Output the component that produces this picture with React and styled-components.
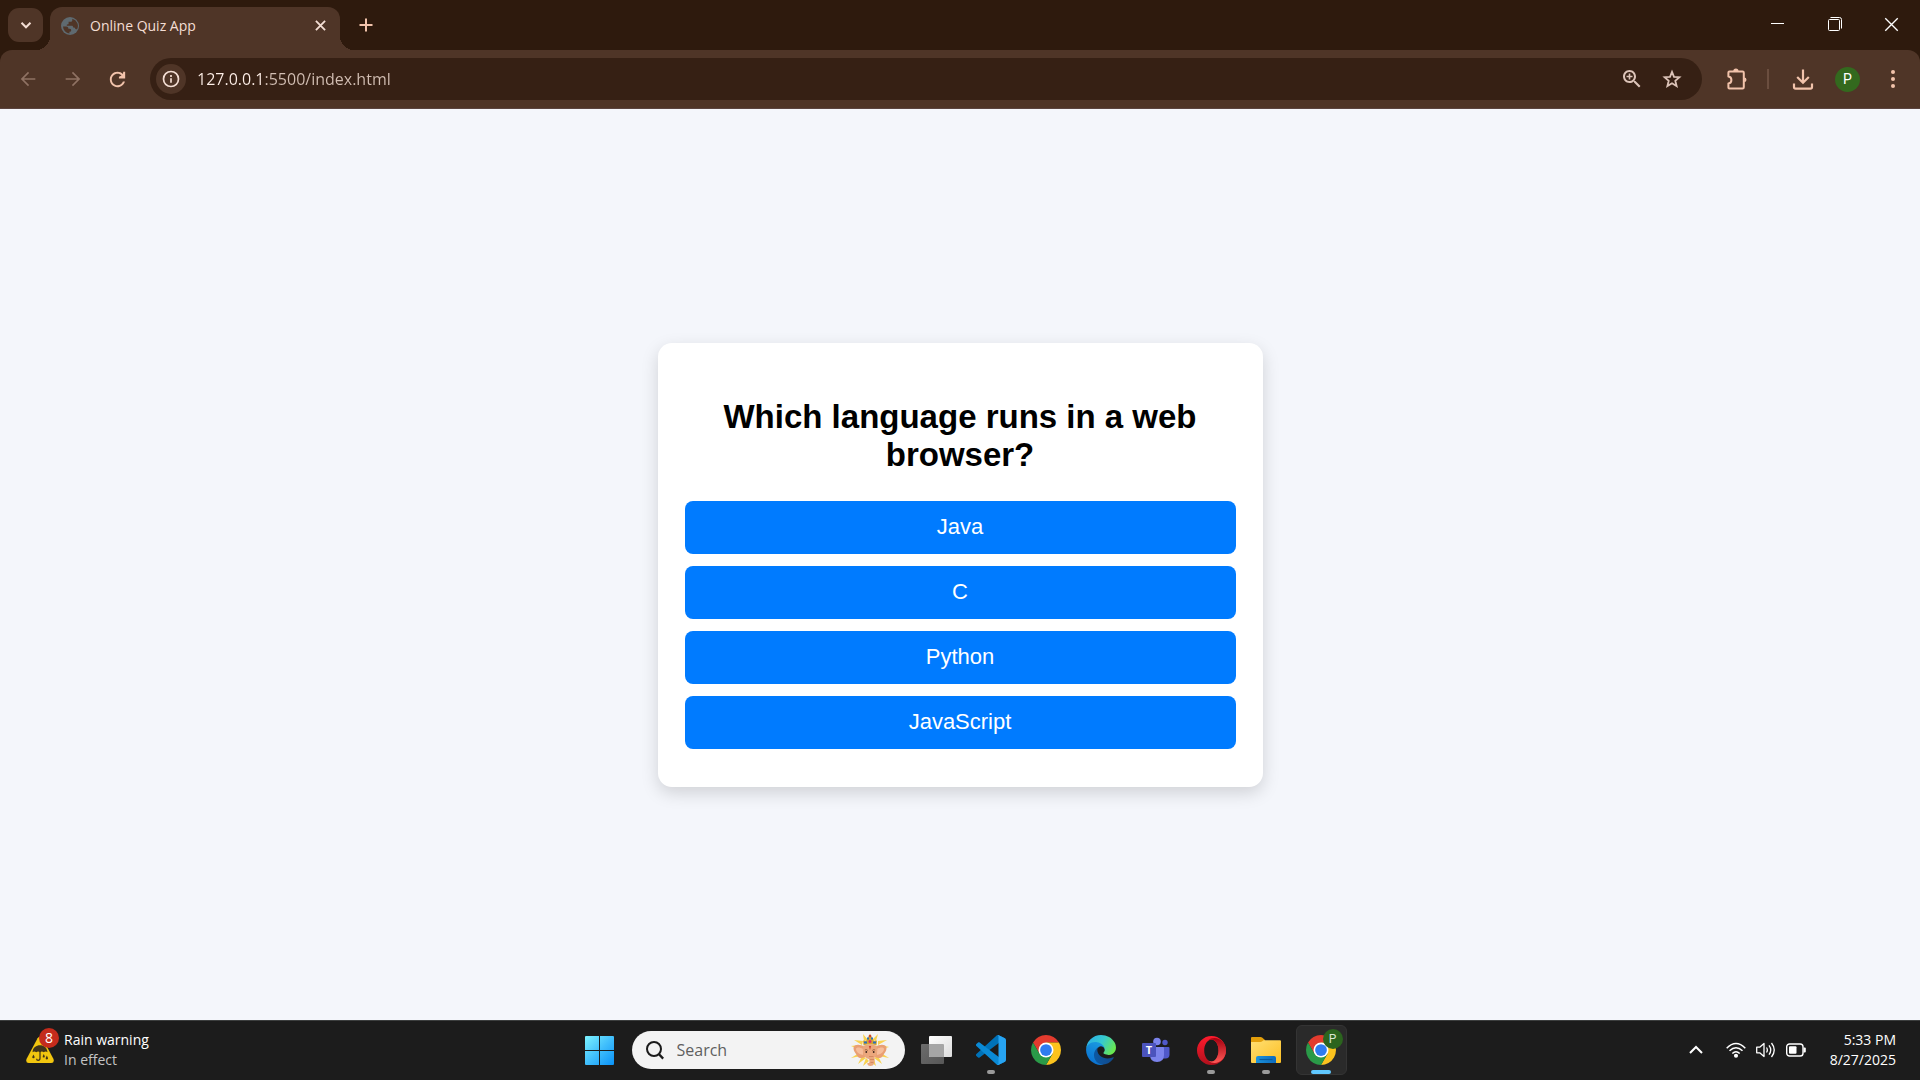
import React from "react";
import styled, { createGlobalStyle } from "styled-components";

const uiFont = `"Open Sans", "Noto Sans", sans-serif`;

const GlobalStyle = createGlobalStyle`
  *, *::before, *::after { box-sizing: border-box; }
  body { margin: 0; }
  button, input { font: inherit; color: inherit; margin: 0; padding: 0; border: 0; background: none; outline: none; }
  svg { display: block; flex: none; }
`;

const Desktop = styled.div`
  display: flex;
  flex-direction: column;
  min-height: 100vh;
  font-family: ${uiFont};
`;

/* ---------- browser window ---------- */

const TabStrip = styled.header`
  display: flex;
  align-items: flex-end;
  height: 50px;
  padding-left: 8px;
  background: #2e1a0d;
`;

const TabSearch = styled.button`
  display: grid;
  place-items: center;
  width: 35px;
  height: 34px;
  margin-right: 7px;
  margin-bottom: 8px;
  border-radius: 11px;
  background: #4f3527;
  color: #f4ded4;
`;

const Tab = styled.div`
  position: relative;
  display: flex;
  align-items: center;
  width: 290px;
  height: 43px;
  padding: 0 10px 6px 11px;
  border-radius: 12px 12px 0 0;
  background: #4f3527;
  color: #f4ded4;

  &::before,
  &::after {
    content: "";
    position: absolute;
    bottom: 0;
    width: 14px;
    height: 14px;
  }
  &::before {
    right: 100%;
    background: radial-gradient(circle at 0 0, transparent 14px, #4f3527 14px);
  }
  &::after {
    left: 100%;
    background: radial-gradient(circle at 100% 0, transparent 14px, #4f3527 14px);
  }
`;

const TabTitle = styled.span`
  flex: 1;
  margin-left: 11px;
  font-size: 14px;
  line-height: 20px;
`;

const IconButton = styled.button`
  display: grid;
  place-items: center;
  width: ${(p) => p.$size}px;
  height: ${(p) => p.$size}px;
  color: ${(p) => p.$color || "inherit"};
`;

const NewTab = styled(IconButton)`
  margin: 0 0 12px 13px;
`;

const WindowControls = styled.div`
  display: flex;
  align-self: flex-start;
  margin-left: auto;
`;

const WindowButton = styled.button`
  display: grid;
  place-items: center;
  width: 57px;
  height: 48px;
  color: #fff;
`;

const ToolbarBack = styled.div`
  background: #2e1a0d;
`;

const Toolbar = styled.nav`
  display: flex;
  align-items: center;
  height: 59px;
  padding: 0 5px;
  border-bottom: 1px solid #5b443f;
  border-radius: 12px 12px 0 0;
  background: #4f3527;
`;

const AddressBar = styled.div`
  display: flex;
  flex: 1;
  align-items: center;
  height: 42px;
  margin: 0 12px 0 10px;
  padding: 0 10px 0 6px;
  border-radius: 21px;
  background: #362014;
  color: #dcc3b8;
`;

const SiteInfo = styled.button`
  display: grid;
  place-items: center;
  width: 30px;
  height: 30px;
  border-radius: 50%;
  background: #4f3527;
  color: #f4ded4;
`;

const AddressInput = styled.input`
  flex: 1;
  height: 30px;
  margin-left: 11px;
  font-size: 16px;
  background: linear-gradient(90deg, #fff0e9 67px, #d3bfb4 67px);
  background-clip: text;
  -webkit-text-fill-color: transparent;
`;

const Divider = styled.span`
  width: 2px;
  height: 20px;
  margin: 0 11px 0 8px;
  background: #6b4e3f;
`;

const Avatar = styled.span`
  display: grid;
  place-items: center;
  width: 25px;
  height: 25px;
  border-radius: 50%;
  background: #33691e;
  color: #fff;
  font: 14px/25px Roboto, sans-serif;
`;

/* ---------- quiz page ---------- */

const Page = styled.main`
  display: flex;
  flex: 1;
  align-items: center;
  justify-content: center;
  background: #f4f6fb;
  font-family: "Liberation Sans", Arial, sans-serif;
`;

const QuizCard = styled.section`
  width: 605px;
  padding: 55px 27px 38px;
  border-radius: 14px;
  background: #fff;
  box-shadow: 0 6px 17px rgba(0, 0, 0, 0.15);
`;

const Question = styled.h2`
  margin: 0 0 27px;
  color: #000;
  font-size: 33px;
  font-weight: 700;
  line-height: 38px;
  text-align: center;
`;

const AnswerList = styled.div`
  display: grid;
  gap: 12px;
`;

const Answer = styled.button`
  height: 53px;
  border-radius: 8px;
  background: #007bff;
  color: #fff;
  font-size: 22px;
  cursor: pointer;
`;

/* ---------- taskbar ---------- */

const Taskbar = styled.footer`
  display: grid;
  grid-template-columns: 1fr auto 1fr;
  align-items: center;
  height: 60px;
  background: #1c1c1c;
  box-shadow: inset 0 1px #3c3e3e;
  color: #fff;
  font-size: 14px;
  line-height: 20px;
`;

const Weather = styled.button`
  display: flex;
  align-items: center;
  justify-self: start;
  padding-left: 25px;
  gap: 9px;
  text-align: left;
`;

const WeatherIcon = styled.span`
  position: relative;
`;

const WeatherBadge = styled.span`
  position: absolute;
  top: -8px;
  right: -4px;
  width: 20px;
  height: 20px;
  border-radius: 50%;
  background: #c42b1c;
  font-size: 14px;
  line-height: 20px;
  text-align: center;
`;

const Line = styled.span`
  display: block;
  color: ${(p) => (p.$dim ? "#c4c4c4" : "#fff")};
`;

const Apps = styled.div`
  display: flex;
  align-items: center;
`;

const AppButton = styled.button`
  position: relative;
  display: grid;
  place-items: center;
  width: 51px;
  height: 50px;
  margin: 0 2px;
  border: 1px solid ${(p) => (p.$active ? "#343434" : "transparent")};
  border-radius: 6px;
  background: ${(p) => (p.$active ? "#2a2a2a" : "none")};

  &::after {
    content: "";
    position: absolute;
    bottom: 0;
    width: ${(p) => (p.$active ? 20 : p.$running ? 8 : 0)}px;
    height: 4px;
    border-radius: 2px;
    background: ${(p) => (p.$active ? "#60c8ff" : "#9a9a9a")};
  }
`;

const ProfileBadge = styled.span`
  position: absolute;
  top: 3px;
  right: 3px;
  width: 20px;
  height: 20px;
  border-radius: 50%;
  background: #2b641e;
  color: #d7e6d2;
  font: 12px/20px Roboto, sans-serif;
`;

const SearchBox = styled.label`
  display: flex;
  align-items: center;
  width: 273px;
  height: 38px;
  margin: 0 4px 0 5px;
  padding: 0 15px 0 14px;
  border-radius: 19px;
  background: #f3f3f3;
  color: #1b1b1b;
`;

const SearchInput = styled.input`
  flex: 1;
  min-width: 0;
  margin-left: 13px;
  font-size: 16px;
  &::placeholder { color: #5f5f5f; opacity: 1; }
`;

const Tray = styled.div`
  display: flex;
  align-items: center;
  justify-self: end;
  padding-right: 24px;
`;

const TrayGroup = styled.button`
  display: flex;
  align-items: center;
  gap: 10px;
  margin: 0 20px 0 22px;
`;

const Clock = styled.button`
  min-width: 70px;
  text-align: right;
`;

/* ---------- icons ---------- */

const Glyph = ({ d, size }) => (
  <svg width={size} height={size} viewBox="0 0 24 24" fill="currentColor"><path d={d} /></svg>
);

const paths = {
  back: "M20 11.1H7.5l5.7-5.7L12 4.1 4.1 12l7.9 7.9 1.2-1.3-5.7-5.7H20z",
  forward: "M4 11.1h12.5l-5.7-5.7L12 4.1l7.9 7.9-7.9 7.9-1.2-1.3 5.7-5.7H4z",
  reload: "M17.65 6.35C16.2 4.9 14.21 4 12 4c-4.42 0-7.99 3.58-7.99 8s3.57 8 7.99 8c3.73 0 6.84-2.55 7.73-6h-2.08c-.82 2.33-3.04 4-5.65 4-3.31 0-6-2.69-6-6s2.69-6 6-6c1.66 0 3.14.69 4.22 1.78L13.5 9v2H20V4h-2z",
  zoom: "M15.5 14h-.79l-.28-.27C15.41 12.59 16 11.11 16 9.5 16 5.91 13.09 3 9.5 3S3 5.91 3 9.5 5.91 16 9.5 16c1.61 0 3.09-.59 4.23-1.57l.27.28v.79l5 4.99L20.49 19l-4.99-5zm-6 0C7.01 14 5 11.99 5 9.5S7.01 5 9.5 5 14 7.01 14 9.5 11.99 14 9.5 14zm3-3.7h-2.2v2.2H8.7v-2.2H6.5V8.7h2.2V6.5h1.6v2.2h2.2z",
};

const Star = () => (
  <svg width="20" height="20" viewBox="0 0 20 20" fill="none" stroke="currentColor" strokeWidth="1.8">
    <path d="M10 2.800l2 5 5.400.400-4.100 3.600 1.300 5.300-4.600-2.900-4.600 2.900 1.300-5.300-4.100-3.600 5.400-.400z" />
  </svg>
);

const Globe = () => (
  <svg width="18" height="18" viewBox="0 0 18 18">
    <circle cx="9" cy="9" r="9" fill="#5f6a70" />
    <path d="M2 9.5h3.2c1.7 0 2.2 1 2.2 2.2h1.4c1.2 0 1.4.9 1.4 1.8 0 1-.8 1.2-1.8 1.3v1.7A7.3 7.3 0 0 1 2 9.5zM11.3 1.8v1.4c0 1.2-.8 1.6-2 1.6H7.6v1.7c0 .9-.7 1.1-1.8 1.2v1h4.8c1.2 0 1.4.7 1.6 1.7.9 0 1.9-.1 1.9.9 0 1.4 1.6.9 1.9 1.2A7.4 7.4 0 0 0 11.3 1.8z" fill="#4f3527" />
  </svg>
);

const Info = () => (
  <svg width="18" height="18" viewBox="0 0 18 18" fill="none" stroke="currentColor" strokeWidth="1.7">
    <circle cx="9" cy="9" r="7.5" /><path d="M9 8.2v4.6M9 5.1v1.8" />
  </svg>
);

const Puzzle = () => (
  <svg width="24" height="24" viewBox="0 0 24 24" fill="none" stroke="currentColor" strokeWidth="2" strokeLinejoin="round">
    <path d="M3.4 5.6Q3.4 4.6 4.4 4.6h13.2q1.2 0 1.2 1.2v14.4q0 1.200-1.200 1.200H4.400q-1 0-1-1v-3.900c4-.4 4-6.600 0-7z" />
    <path d="M8.300 4.200a2.600 2.600 0 0 1 5.200 0zM19.200 10.400a2.300 2.300 0 0 1 0 4.600z" fill="currentColor" stroke="none" />
  </svg>
);

const Download = () => (
  <svg width="24" height="24" viewBox="0 0 24 24" fill="none" stroke="currentColor" strokeWidth="2.2">
    <path d="M12 2.5v13M6.2 10l5.8 5.8 5.8-5.8M3 16.5v3.6q0 1.6 1.6 1.6h14.8q1.6 0 1.6-1.6v-3.6" />
  </svg>
);

const Dots = () => (
  <svg width="6" height="20" viewBox="0 0 6 20" fill="currentColor">
    <circle cx="3" cy="3" r="2" /><circle cx="3" cy="10" r="2" /><circle cx="3" cy="17" r="2" />
  </svg>
);

const Cross = ({ size, width }) => (
  <svg width={size} height={size} viewBox="0 0 12 12" fill="none" stroke="currentColor" strokeWidth={width}>
    <path d="M1 1l10 10M11 1L1 11" />
  </svg>
);

const RainWarning = () => (
  <svg width="30" height="28" viewBox="0 0 32 28" preserveAspectRatio="none">
    <path d="M13.4 2.2Q16 -1 18.6 2.2L30.4 23Q31.6 27 28 27H4Q.4 27 1.6 23z" fill="#f2c60f" />
    <path d="M8 16.2c.5-5 4-7 8-7s7.500 2 8 7q-2-1.300-4 0-2-1.300-4 0-2-1.300-4 0-2-1.300-4 0z" fill="#40341a" />
    <path d="M16 15v7.300q0 2-2 2-1.600 0-1.600-1.600" fill="none" stroke="#40341a" strokeWidth="1.300" />
    <path d="M9 18.500l1.300 2.500a1.300 1.300 0 1 1-2.600 0zM20 18l1 2a1.100 1.100 0 1 1-2 0zM23.300 19.500l1.100 2.200a1.200 1.200 0 1 1-2.200 0z" fill="#40341a" />
  </svg>
);

const Windows = () => (
  <svg width="29" height="29" viewBox="0 0 29 29">
    <defs><linearGradient id="win" x1="0" y1="0" x2="1" y2="1"><stop stopColor="#7df3ff" /><stop offset=".5" stopColor="#41bffc" /><stop offset="1" stopColor="#0a92f8" /></linearGradient></defs>
    <path d="M1 0h13v14H0V1q0-1 1-1zM15 0h13q1 0 1 1v13H15zM0 15h14v14H1q-1 0-1-1zM15 15h14v13q0 1-1 1H15z" fill="url(#win)" />
  </svg>
);

const Magnifier = () => (
  <svg width="18" height="19" viewBox="0 0 18 19" fill="none" stroke="currentColor" strokeWidth="2">
    <circle cx="8" cy="8" r="7" /><path d="M12.800 13l4.400 4.600" strokeWidth="2.400" />
  </svg>
);

const Ganesha = () => (
  <svg width="40" height="34" viewBox="0 0 40 34">
    <path d="M14 8L13 1l5 6zM26 8l2-7-6 6zM12 12L4 7l9 1zM28 12l9-5-9 1zM8 16l-7-3 8-1zM32 16l7-2-8-2zM9 20l-8 5 10-2zM31 20l8 5-10-2zM12 23l-4 8 8-6zM28 23l4 8-8-6zM16 25l-3 8 6-5zM24 26l2 7-6-5z" fill="#f8d24f" />
    <path d="M15 14C10 11 4 11 3.500 15c0 3 1.500 4 2.500 6s3 6 9 3zM25 14c5-3 11-3 11.500 1 0 3-1.500 4-2.500 6s-3 6-9 3z" fill="#e99f74" />
    <path d="M13 16c-3-2-7-2-7 0s2 5 7 6zM27 16c3-2 7-2 7 0s-2 5-7 6z" fill="#f6bd9a" />
    <path d="M13.500 13q6.500-4 13 0c2 6 0 9-2 11.500.5 5-.5 8.500-4 8.500-2.500 0-3.700-1.700-3-3.500 1 1 2 .5 2-1l-.500-2.500c-5-1-7.500-7-5.500-13z" fill="#eba77c" />
    <path d="M13.500 12.500L13 7.500l3 .500 4-7 4 7 3-.5-.5 5q-6.500-3-13 0z" fill="#d9a52e" />
    <path d="M14 8.500h3v2h-3zM23 8.500h3v2h-3zM17 4.500h2v2h-2zM21 4.500h2v2h-2z" fill="#2a72bb" />
    <circle cx="20" cy="8.500" r="1.500" fill="#d82f73" /><circle cx="20" cy="3" r="1.300" fill="#cf432d" />
    <path d="M18.900 13h2.200L20 17z" fill="#c9412c" />
    <path d="M14.800 17q1.700-1 3 .500M22.200 17.500q1.300-1.500 3-.5" fill="none" stroke="#8d5034" strokeWidth=".8" />
    <circle cx="16.300" cy="19" r=".9" fill="#3c241a" /><circle cx="23.700" cy="19" r=".9" fill="#3c241a" />
    <path d="M19 23.500h4.500M20 26.500h4M20.500 29.500h3" stroke="#cf8359" strokeWidth=".8" />
  </svg>
);

const TaskView = () => (
  <svg width="31" height="29" viewBox="0 0 31 29">
    <defs>
      <linearGradient id="tvf" x1="0" y1="0" x2="1" y2="1"><stop stopColor="#fff" /><stop offset="1" stopColor="#dcdcdc" /></linearGradient>
      <linearGradient id="tvb" x1="0" y1="0" x2="1" y2="1"><stop stopColor="#6c6c6c" /><stop offset="1" stopColor="#575757" /></linearGradient>
    </defs>
    <rect x="0" y="8" width="23" height="20" rx="1" fill="url(#tvb)" />
    <rect x="8" y="0" width="23" height="21" rx="1" fill="url(#tvf)" />
    <path d="M8 8h14q1 0 1 1v12H9q-1 0-1-1z" fill="#a6a6a6" />
  </svg>
);

const VSCode = () => (
  <svg width="30" height="30" viewBox="0 0 100 100">
    <path fill="#0072b8" d="M96.460 10.800L75.860.88C73.470-.27 70.620.21 68.750 2.080L1.300 63.580c-1.810 1.660-1.810 4.510 0 6.170l5.510 5c1.490 1.350 3.720 1.450 5.320.24L93.360 13.370C96.090 11.300 100 13.250 100 16.670v-.24c0-2.400-1.380-4.590-3.540-5.630z" />
    <path fill="#0a8ad6" d="M96.460 89.200l-20.600 9.920c-2.390 1.150-5.240.67-7.110-1.200L1.300 36.420c-1.810-1.660-1.810-4.510 0-6.170l5.510-5c1.490-1.350 3.720-1.450 5.320-.24l81.230 61.620c2.730 2.070 6.640.12 6.640-3.300v.24c0 2.400-1.380 4.590-3.540 5.630z" />
    <path fill="#27a4f2" d="M75.860 99.130c-2.390 1.140-5.240.66-7.110-1.210 2.310 2.300 6.250.67 6.250-2.590V4.670c0-3.260-3.940-4.890-6.250-2.590C70.620.21 73.470-.27 75.860.87l20.600 9.910c2.160 1.040 3.540 3.230 3.540 5.630v67.180c0 2.400-1.380 4.590-3.540 5.630z" />
  </svg>
);

const Chrome = () => (
  <svg width="30" height="30" viewBox="0 0 48 48">
    <path d="M24 12h20.780A24 24 0 0 0 3.220 12L13.600 30z" fill="#e33b2e" />
    <path d="M34.400 30L24 48A24 24 0 0 0 44.780 12H24z" fill="#fcc31e" />
    <path d="M13.600 30L3.220 12A24 24 0 0 0 24 48l10.400-18z" fill="#2a9a48" />
    <circle cx="24" cy="24" r="12" fill="#fff" /><circle cx="24" cy="24" r="9.400" fill="#2f7cf0" />
  </svg>
);

const Edge = () => (
  <svg width="30" height="30" viewBox="4 5 257 257">
    <defs>
      <linearGradient id="ed1" x1="0" y1="0" x2="1" y2="0"><stop stopColor="#0c59a4" /><stop offset="1" stopColor="#114a8b" /></linearGradient>
      <linearGradient id="ed2" x1=".7" y1="0" x2=".3" y2="1"><stop stopColor="#1b9de2" /><stop offset=".5" stopColor="#1285d8" /><stop offset="1" stopColor="#0a6fd0" /></linearGradient>
      <linearGradient id="ed3" x1="0" y1=".2" x2="1" y2=".6"><stop stopColor="#2aaee8" /><stop offset=".5" stopColor="#36c9cf" /><stop offset="1" stopColor="#6ae84e" /></linearGradient>
    </defs>
    <path fill="url(#ed1)" d="M235.680 195.460a93.730 93.730 0 0 1-10.540 4.710 101.870 101.870 0 0 1-35.900 6.460c-47.320 0-88.540-32.550-88.540-74.320A31.480 31.480 0 0 1 117.130 105c-42.800 1.800-53.800 46.400-53.800 72.530 0 73.880 68.090 81.370 82.760 81.370 7.910 0 19.840-2.300 27-4.560l1.310-.44a128.340 128.340 0 0 0 66.600-52.800 4 4 0 0 0-5.320-5.640z" />
    <path fill="url(#ed2)" d="M110.340 246.340A79.200 79.200 0 0 1 87.600 225a80.720 80.720 0 0 1 29.530-120c3.120-1.470 8.450-4.130 15.540-4a32.350 32.350 0 0 1 25.690 13 31.880 31.880 0 0 1 6.360 18.660c0-.21 24.460-79.600-80-79.600-43.900 0-80 41.660-80 78.210a130.150 130.150 0 0 0 12.110 56 128 128 0 0 0 156.380 67.110 75.550 75.550 0 0 1-62.780-8z" />
    <path fill="url(#ed3)" d="M156.940 153.780c-.81 1.050-3.300 2.500-3.300 5.660 0 2.610 1.700 5.120 4.720 7.230 14.380 10 41.490 8.680 41.560 8.680a59.560 59.560 0 0 0 30.270-8.350A61.380 61.380 0 0 0 260.620 114c.26-22.410-8-37.310-11.340-43.910C228.090 28.760 182.350 5 132.620 5A128 128 0 0 0 4.630 131.200c.48-36.540 36.800-66.050 80-66.050 3.500 0 23.460.34 42 10.070 16.340 8.580 24.900 18.940 30.850 29.210 6.180 10.670 7.280 24.150 7.280 29.520s-2.740 13.330-7.820 19.830z" />
  </svg>
);

const Teams = () => (
  <svg width="28" height="26" viewBox="0 0 28 26">
    <circle cx="23" cy="5.500" r="2.700" fill="#5059c9" /><circle cx="15" cy="4.500" r="3.800" fill="#7b83eb" />
    <path d="M20 10h6.500q1 0 1 1v6.500q0 4-4 4h-4z" fill="#5059c9" />
    <path d="M9 10h12q1 0 1 1v7q0 7-7 7t-7-7z" fill="#7b83eb" />
    <rect x="0" y="6" width="14" height="14" rx="1" fill="#4b53bc" />
    <text x="7" y="17" fill="#fff" fontFamily="Open Sans, sans-serif" fontSize="11" fontWeight="700" textAnchor="middle">T</text>
  </svg>
);

const Opera = () => (
  <svg width="29" height="29" viewBox="0 0 29 29">
    <defs><linearGradient id="opa" x1="0" y1="0" x2="0" y2="1"><stop stopColor="#ff1b2d" /><stop offset="1" stopColor="#b0101c" /></linearGradient>
      <linearGradient id="opb" x1="0" y1="0" x2="0" y2="1"><stop stopColor="#a5000f" /><stop offset="1" stopColor="#ff5a57" /></linearGradient></defs>
    <path fillRule="evenodd" d="M14.500 0a14.500 14.500 0 1 0 0 29 14.500 14.500 0 1 0 0-29zM14.500 3.500c4 0 7 5 7 11s-3 11-7 11-7.300-5-7.300-11 3.300-11 7.300-11z" fill="url(#opa)" />
    <path d="M11 4.500c7-6 18-.5 18 10s-11 16-18 10c7 3.500 10.500-4 10.500-10S18 1 11 4.500z" fill="url(#opb)" />
  </svg>
);

const Folder = () => (
  <svg width="30" height="27" viewBox="0 0 30 27">
    <defs><linearGradient id="fo" x1="0" y1="0" x2="1" y2="1"><stop stopColor="#ffdf73" /><stop offset="1" stopColor="#fcbf23" /></linearGradient>
      <linearGradient id="fb" x1="0" y1="0" x2="1" y2="0"><stop stopColor="#1d94dc" /><stop offset="1" stopColor="#0b69bd" /></linearGradient></defs>
    <path d="M0 1q0-1 1-1h8.500q1 0 1.600.6L14 3v4H0z" fill="#e39f0b" />
    <path d="M0 5h9.500q1 0 1.800-.7l1.200-1H29q1 0 1 1V25q0 1-1 1H1q-1 0-1-1z" fill="url(#fo)" />
    <path d="M5 26v-5q0-2 2-2h16q2 0 2 2v5z" fill="url(#fb)" /><path d="M8.500 22.500h13" stroke="#075a9e" strokeWidth="1.200" />
  </svg>
);

const Chevron = ({ size, up, width }) => (
  <svg width={size} height={size} viewBox="0 0 14 14" fill="none" stroke="currentColor" strokeWidth={width}>
    <path d={up ? "M1 10l6-6 6 6" : "M2.500 4.800l4.500 4.500 4.500-4.500"} />
  </svg>
);

const Wifi = () => (
  <svg width="20" height="16" viewBox="0 0 20 16" fill="none" stroke="#fff" strokeWidth="1.500">
    <path d="M.700 6.200Q10-3.200 19.300 6.200M3.500 8.800q6.500-6.200 13 0M6.300 11.500q3.700-3.600 7.400 0" /><circle cx="10" cy="13.700" r="1.300" fill="#fff" />
  </svg>
);

const Sound = () => (
  <svg width="20" height="16" viewBox="0 0 20 16" fill="none" stroke="#fff" strokeWidth="1.300">
    <path d="M.700 5.200h3L8 1.500v13L3.700 10.800h-3z" strokeLinejoin="round" /><path d="M10.500 5.500q1.700 2.500 0 5M13 3.300q3.500 4.700 0 9.400M15.500 1q5.500 7 0 14" />
  </svg>
);

const Battery = () => (
  <svg width="20" height="14" viewBox="0 0 20 14">
    <rect x=".7" y="1" width="16.300" height="12" rx="2.800" fill="none" stroke="#fff" strokeWidth="1.400" />
    <rect x="3" y="3.300" width="7.500" height="7.400" rx="1" fill="#fff" /><path d="M17.500 4.500h1.300q1 0 1 1v3q0 1-1 1h-1.300z" fill="#fff" />
  </svg>
);

const answers = ["Java", "C", "Python", "JavaScript"];

const apps = [
  { name: "Task view", Icon: TaskView },
  { name: "Visual Studio Code", Icon: VSCode, running: true },
  { name: "Chrome", Icon: Chrome },
  { name: "Edge", Icon: Edge },
  { name: "Teams", Icon: Teams },
  { name: "Opera", Icon: Opera, running: true },
  { name: "File Explorer", Icon: Folder, running: true },
  { name: "Chrome, profile P", Icon: Chrome, active: true, badge: "P" },
];

export default function App() {
  return (
    <Desktop>
      <GlobalStyle />
      <TabStrip>
        <TabSearch aria-label="Search tabs"><Chevron size={14} width={2} /></TabSearch>
        <Tab>
          <Globe />
          <TabTitle>Online Quiz App</TabTitle>
          <IconButton $size={20} aria-label="Close tab"><Cross size={11} width={2} /></IconButton>
        </Tab>
        <NewTab $size={26} $color="#f2c3ab" aria-label="New tab">
          <svg width="14" height="14" viewBox="0 0 14 14" stroke="currentColor" strokeWidth="2"><path d="M7 .5v13M.5 7h13" /></svg>
        </NewTab>
        <WindowControls>
          <WindowButton aria-label="Minimize">
            <svg width="13" height="13" viewBox="0 0 13 13" stroke="currentColor"><path d="M0 5.500h13" /></svg>
          </WindowButton>
          <WindowButton aria-label="Restore">
            <svg width="14" height="14" viewBox="0 0 14 14" fill="none" stroke="currentColor"><rect x=".5" y="2.500" width="11" height="11" rx="1" /><path d="M2.500 .5h9q2 0 2 2v9" /></svg>
          </WindowButton>
          <WindowButton aria-label="Close"><Cross size={15} width={1.1} /></WindowButton>
        </WindowControls>
      </TabStrip>

      <ToolbarBack>
        <Toolbar>
          <IconButton $size={45} $color="#8f7263" aria-label="Back"><Glyph d={paths.back} size={22} /></IconButton>
          <IconButton $size={45} $color="#8f7263" aria-label="Forward"><Glyph d={paths.forward} size={22} /></IconButton>
          <IconButton $size={45} $color="#f2c3ab" aria-label="Reload"><Glyph d={paths.reload} size={23} /></IconButton>
          <AddressBar>
            <SiteInfo aria-label="Site information"><Info /></SiteInfo>
            <AddressInput aria-label="Address" defaultValue="127.0.0.1:5500/index.html" spellCheck={false} />
            <IconButton $size={40} aria-label="Zoom"><Glyph d={paths.zoom} size={24} /></IconButton>
            <IconButton $size={40} aria-label="Bookmark"><Star /></IconButton>
          </AddressBar>
          <IconButton $size={45} $color="#f2c3ab" aria-label="Extensions"><Puzzle /></IconButton>
          <Divider />
          <IconButton $size={45} $color="#f2c3ab" aria-label="Downloads"><Download /></IconButton>
          <IconButton $size={45} aria-label="Profile"><Avatar>P</Avatar></IconButton>
          <IconButton $size={45} $color="#f2c3ab" aria-label="Menu"><Dots /></IconButton>
        </Toolbar>
      </ToolbarBack>

      <Page>
        <QuizCard>
          <Question>Which language runs in a web browser?</Question>
          <AnswerList>
            {answers.map((a) => <Answer key={a}>{a}</Answer>)}
          </AnswerList>
        </QuizCard>
      </Page>

      <Taskbar>
        <Weather>
          <WeatherIcon><RainWarning /><WeatherBadge>8</WeatherBadge></WeatherIcon>
          <span><Line>Rain warning</Line><Line $dim>In effect</Line></span>
        </Weather>
        <Apps>
          <AppButton aria-label="Start"><Windows /></AppButton>
          <SearchBox>
            <Magnifier />
            <SearchInput placeholder="Search" aria-label="Search" />
            <Ganesha />
          </SearchBox>
          {apps.map(({ name, Icon, running, active, badge }) => (
            <AppButton key={name} aria-label={name} $running={running} $active={active}>
              <Icon />
              {badge && <ProfileBadge>{badge}</ProfileBadge>}
            </AppButton>
          ))}
        </Apps>
        <Tray>
          <IconButton $size={16} aria-label="Show hidden icons"><Chevron size={14} width={2} up /></IconButton>
          <TrayGroup aria-label="Network, sound and battery"><Wifi /><Sound /><Battery /></TrayGroup>
          <Clock><Line>5:33 PM</Line><Line>8/27/2025</Line></Clock>
        </Tray>
      </Taskbar>
    </Desktop>
  );
}
